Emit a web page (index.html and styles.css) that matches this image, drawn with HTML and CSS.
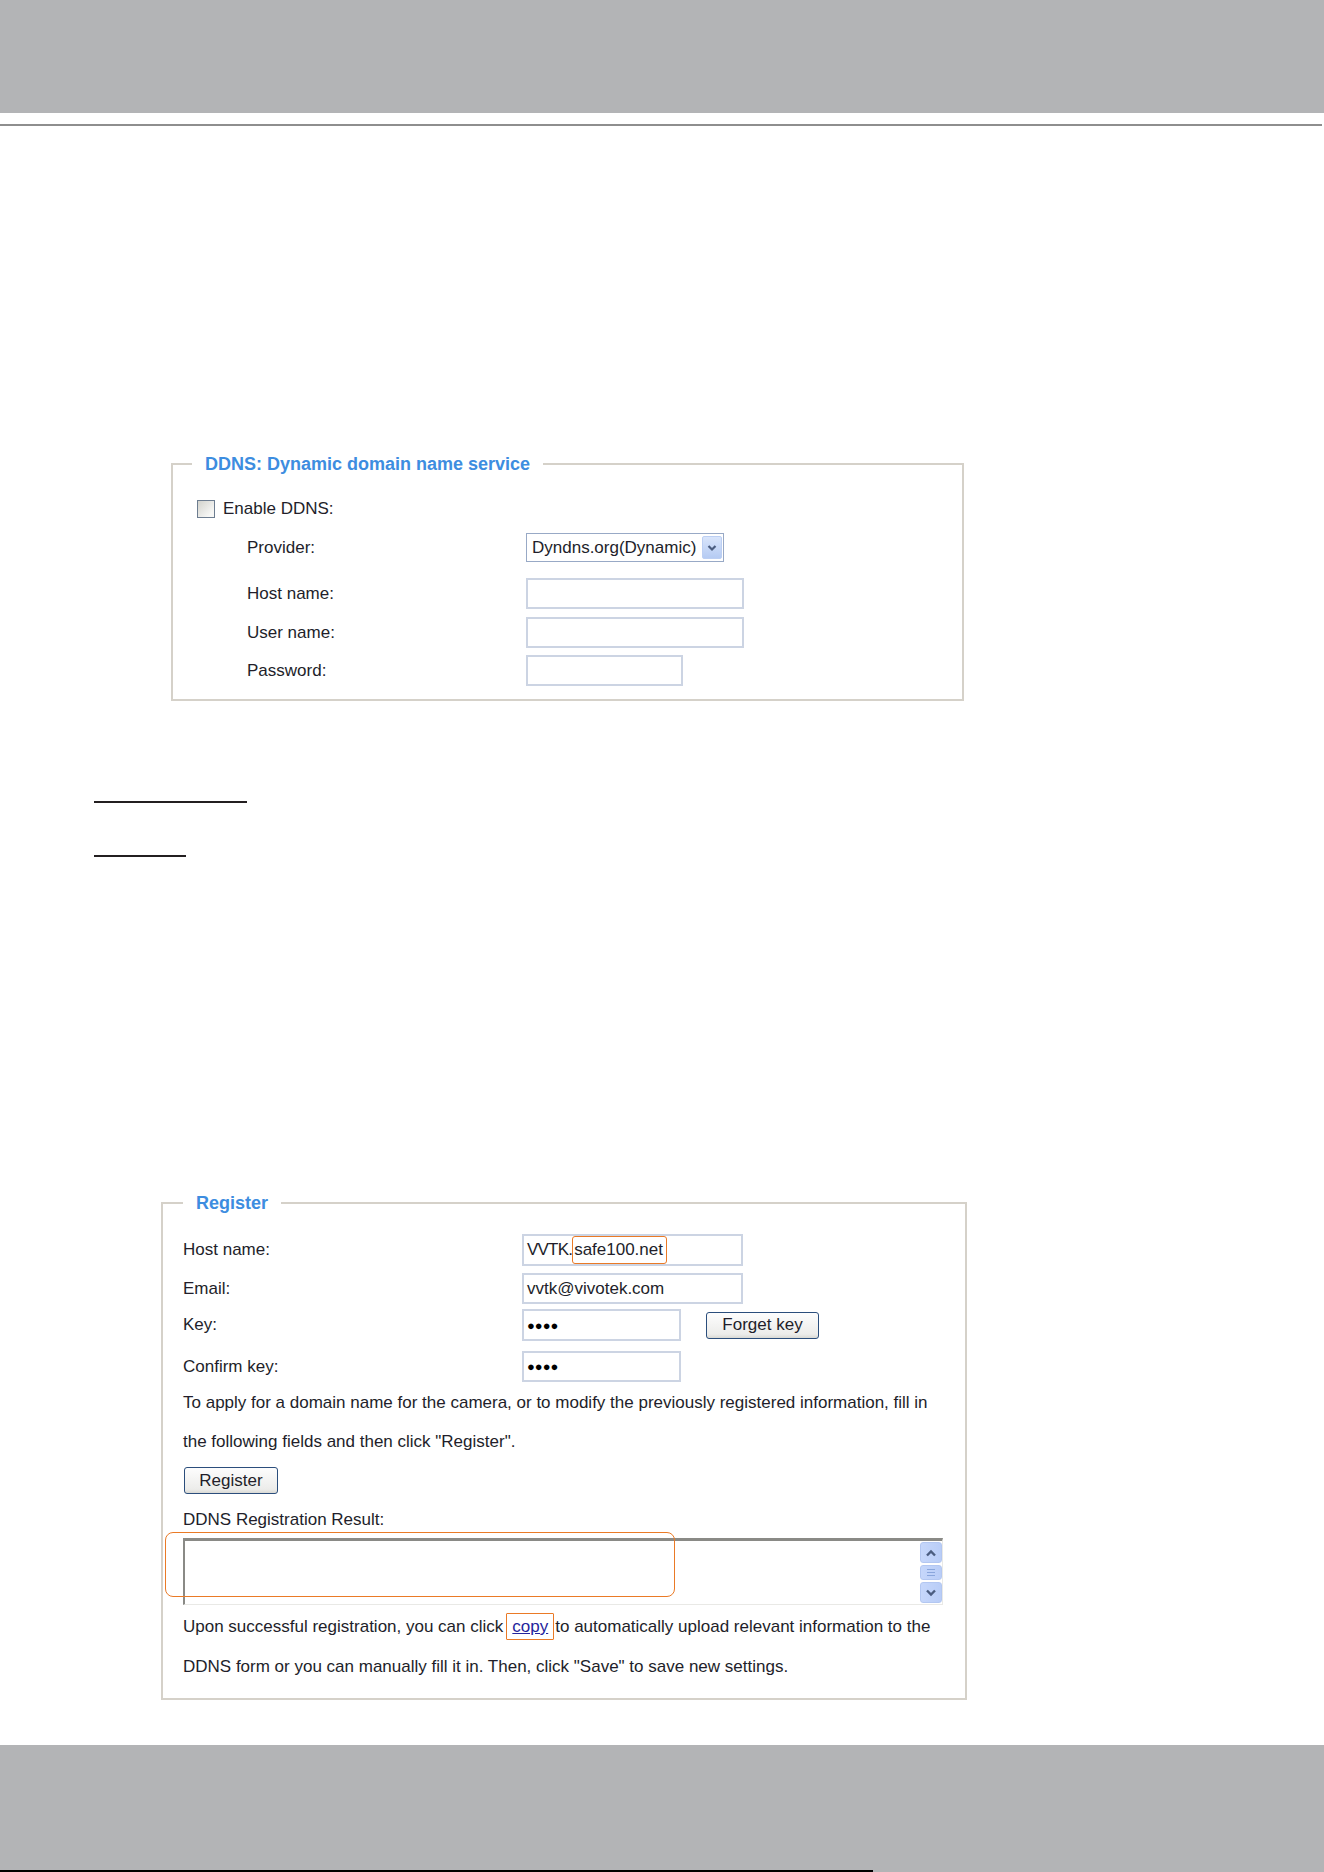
FILE: index.html
```html
<!DOCTYPE html>
<html lang="en">
<head>
    <meta charset="UTF-8">
    <meta name="viewport" content="width=device-width, initial-scale=1.0">
    <title>DDNS</title>
    <link rel="stylesheet" href="styles.css">
</head>
<body>
    <div class="page-head"></div>
    <div class="head-rule"></div>

    <fieldset class="box box-ddns">
        <legend>DDNS: Dynamic domain name service</legend>
        <div class="check-row">
            <span class="checkbox"></span>
            <span>Enable DDNS:</span>
        </div>
        <div class="field-row row-provider">
            <span class="label">Provider:</span>
            <div class="select">
                <span>Dyndns.org(Dynamic)</span>
                <span class="select-btn">
                    <svg width="10" height="8" viewBox="0 0 10 8"><path d="M1.5 2 L5 5.5 L8.5 2" fill="none" stroke="#4b5d80" stroke-width="2.2"/></svg>
                </span>
            </div>
        </div>
        <div class="field-row row-host">
            <span class="label">Host name:</span>
            <div class="input wide"></div>
        </div>
        <div class="field-row row-user">
            <span class="label">User name:</span>
            <div class="input wide"></div>
        </div>
        <div class="field-row row-pass">
            <span class="label">Password:</span>
            <div class="input narrow"></div>
        </div>
    </fieldset>

    <div class="heading-rule rule-long"></div>
    <div class="heading-rule rule-short"></div>

    <fieldset class="box box-register">
        <legend>Register</legend>
        <div class="field-row reg-host">
            <span class="label">Host name:</span>
            <div class="input wide"><span class="host-prefix">VVTK.</span><span class="mark-host">safe100.net</span></div>
        </div>
        <div class="field-row reg-email">
            <span class="label">Email:</span>
            <div class="input wide">vvtk@vivotek.com</div>
        </div>
        <div class="field-row reg-key">
            <span class="label">Key:</span>
            <div class="input narrow dots">&#9679;&#9679;&#9679;&#9679;</div>
            <span class="button btn-forget">Forget key</span>
        </div>
        <div class="field-row reg-confirm">
            <span class="label">Confirm key:</span>
            <div class="input narrow dots">&#9679;&#9679;&#9679;&#9679;</div>
        </div>
        <div class="note">
            <p>To apply for a domain name for the camera, or to modify the previously registered information, fill in</p>
            <p>the following fields and then click "Register".</p>
        </div>
        <span class="button btn-register">Register</span>
        <p class="result-label">DDNS Registration Result:</p>
        <div class="result-box">
            <div class="result-text"></div>
            <div class="scrollbar">
                <span class="sb-btn">
                    <svg width="12" height="8" viewBox="0 0 12 8"><path d="M2 6.5 L6 2.5 L10 6.5" fill="none" stroke="#4b5d80" stroke-width="2.4"/></svg>
                </span>
                <span class="sb-thumb"><i></i><i></i><i></i></span>
                <span class="sb-btn">
                    <svg width="12" height="8" viewBox="0 0 12 8"><path d="M2 1.5 L6 5.5 L10 1.5" fill="none" stroke="#4b5d80" stroke-width="2.4"/></svg>
                </span>
            </div>
            <div class="mark-result"></div>
        </div>
        <div class="note note-copy">
            <p><span>Upon successful registration, you can click</span><span class="mark-copy"><a href="#">copy</a></span><span>to automatically upload relevant information to the</span></p>
            <p>DDNS form or you can manually fill it in. Then, click "Save" to save new settings.</p>
        </div>
    </fieldset>

    <div class="page-foot">
        <div class="foot-line"></div>
    </div>
</body>
</html>
```

FILE: styles.css
```css
body {
    margin: 0;
    font-family: "Liberation Sans", Arial, sans-serif;
    font-size: 17px;
    color: #221e2a;
    background: #fff;
}

.page-head {
    height: 113px;
    background: #b3b4b6;
}
.head-rule {
    height: 2px;
    margin: 11px 2px 0 0;
    background: #8e8e8e;
}

/* fieldsets */
.box {
    box-sizing: border-box;
    min-width: 0;
    margin: 0;
    border: 2px solid #d5d1c9;
}
.box legend {
    font-size: 18px;
    font-weight: bold;
    line-height: 20px;
    color: #3d8de0;
    padding: 0 13px;
}
.box-ddns {
    width: 793px;
    margin: 328px 0 0 171px;
    padding: 20px 0 13px 0;
}
.box-ddns legend {
    margin-left: 19px;
}
.box-register {
    width: 806px;
    margin: 336px 0 0 161px;
    padding: 21px 0 11px 20px;
}
.box-register legend {
    margin-left: 0;
}

.check-row {
    display: flex;
    align-items: center;
    height: 30px;
    padding-left: 24px;
}
.checkbox {
    width: 16px;
    height: 16px;
    margin-right: 8px;
    border: 1px solid #6d7d90;
    background: linear-gradient(135deg, #d3d3cd, #f7f7f5 80%);
}

.field-row {
    display: flex;
    align-items: center;
    height: 31px;
}
.box-ddns .field-row {
    padding-left: 74px;
}
.box-ddns .label {
    width: 279px;
}
.box-register .label {
    width: 339px;
}
.row-provider { margin-top: 8px; }
.row-host { margin-top: 15px; }
.row-user { margin-top: 8px; }
.row-pass { margin-top: 7px; }
.reg-host { height: 32px; }
.reg-email { margin-top: 7px; }
.reg-key { margin-top: 5px; height: 32px; }
.reg-confirm { margin-top: 10px; }

.select {
    box-sizing: border-box;
    display: flex;
    align-items: center;
    justify-content: space-between;
    width: 198px;
    height: 29px;
    padding: 0 1px 0 5px;
    border: 1px solid #98a9c6;
}
.select-btn {
    display: flex;
    align-items: center;
    justify-content: center;
    width: 20px;
    height: 23px;
    border-radius: 2px;
    border: 1px solid #bccff3;
    box-sizing: border-box;
    background: linear-gradient(#d9e5fb, #b5cbf3);
}

.input {
    box-sizing: border-box;
    display: flex;
    align-items: center;
    height: 100%;
    padding-left: 3px;
    border: 2px solid #ccd4e3;
    white-space: nowrap;
}
.input.wide { width: 221px; }
.box-ddns .input.wide { width: 218px; }
.input.narrow { width: 159px; }
.box-ddns .input.narrow { width: 157px; }
.dots {
    font-size: 13px;
    color: #000;
}
.host-prefix {
    letter-spacing: -0.8px;
}
.mark-host {
    box-sizing: border-box;
    height: 28px;
    display: flex;
    align-items: center;
    padding: 0 3px 0 1px;
    border: 1.5px solid #ea7a26;
    border-radius: 3px;
}

.button {
    box-sizing: border-box;
    display: flex;
    align-items: center;
    justify-content: center;
    height: 27px;
    border: 1px solid #2b4e7c;
    border-radius: 3px;
    background: linear-gradient(#fdfdfd, #ececea 85%, #d9d9d4);
}
.btn-forget {
    width: 113px;
    margin-left: 25px;
}
.btn-register {
    width: 94px;
    margin: 6px 0 0 1px;
}

.note {
    margin-top: 1px;
    line-height: 39px;
}
.note p {
    margin: 0;
}
.note-copy {
    margin-top: 2px;
    line-height: 40px;
}
.result-label {
    margin: 14px 0 0 0;
    line-height: 24px;
}

.result-box {
    position: relative;
    box-sizing: border-box;
    display: flex;
    width: 760px;
    height: 67px;
    margin-top: 6px;
    border-top: 3px solid #8a8a86;
    border-left: 2px solid #8a8a86;
    border-right: 1px solid #e9e9e6;
    border-bottom: 1px solid #e9e9e6;
}
.result-text {
    flex: 1;
}
.scrollbar {
    display: flex;
    flex-direction: column;
    justify-content: space-between;
    width: 22px;
    padding: 1px 0 1px 0;
    gap: 2px;
}
.sb-btn,
.sb-thumb {
    box-sizing: border-box;
    display: flex;
    align-items: center;
    justify-content: center;
    border: 1px solid #b3c7f1;
    border-radius: 3px;
    background: linear-gradient(90deg, #c6d7fb, #b9cdf7);
}
.sb-btn {
    height: 21px;
}
.sb-thumb {
    height: 15px;
    flex-direction: column;
    gap: 2px;
}
.sb-thumb i {
    display: block;
    width: 8px;
    height: 1px;
    background: #8aa6dc;
}
.mark-result {
    position: absolute;
    left: -20px;
    top: -9px;
    width: 510px;
    height: 65px;
    box-sizing: border-box;
    border: 1.5px solid #ea7a26;
    border-radius: 8px;
}

.mark-copy {
    display: inline-block;
    line-height: 25px;
    padding: 0 5px;
    margin: 0 1px 0 3px;
    border: 1.5px solid #ea7a26;
    border-radius: 1px;
}
.mark-copy a {
    color: #24249c;
}

.heading-rule {
    height: 2px;
    margin-left: 94px;
    background: #231f20;
}
.rule-long {
    width: 153px;
    margin-top: 100px;
}
.rule-short {
    width: 92px;
    margin-top: 52px;
}

.page-foot {
    position: relative;
    height: 127px;
    margin-top: 45px;
    background: #b3b4b6;
}
.foot-line {
    position: absolute;
    left: 0;
    bottom: 0;
    width: 873px;
    height: 2px;
    background: #000;
}
```
